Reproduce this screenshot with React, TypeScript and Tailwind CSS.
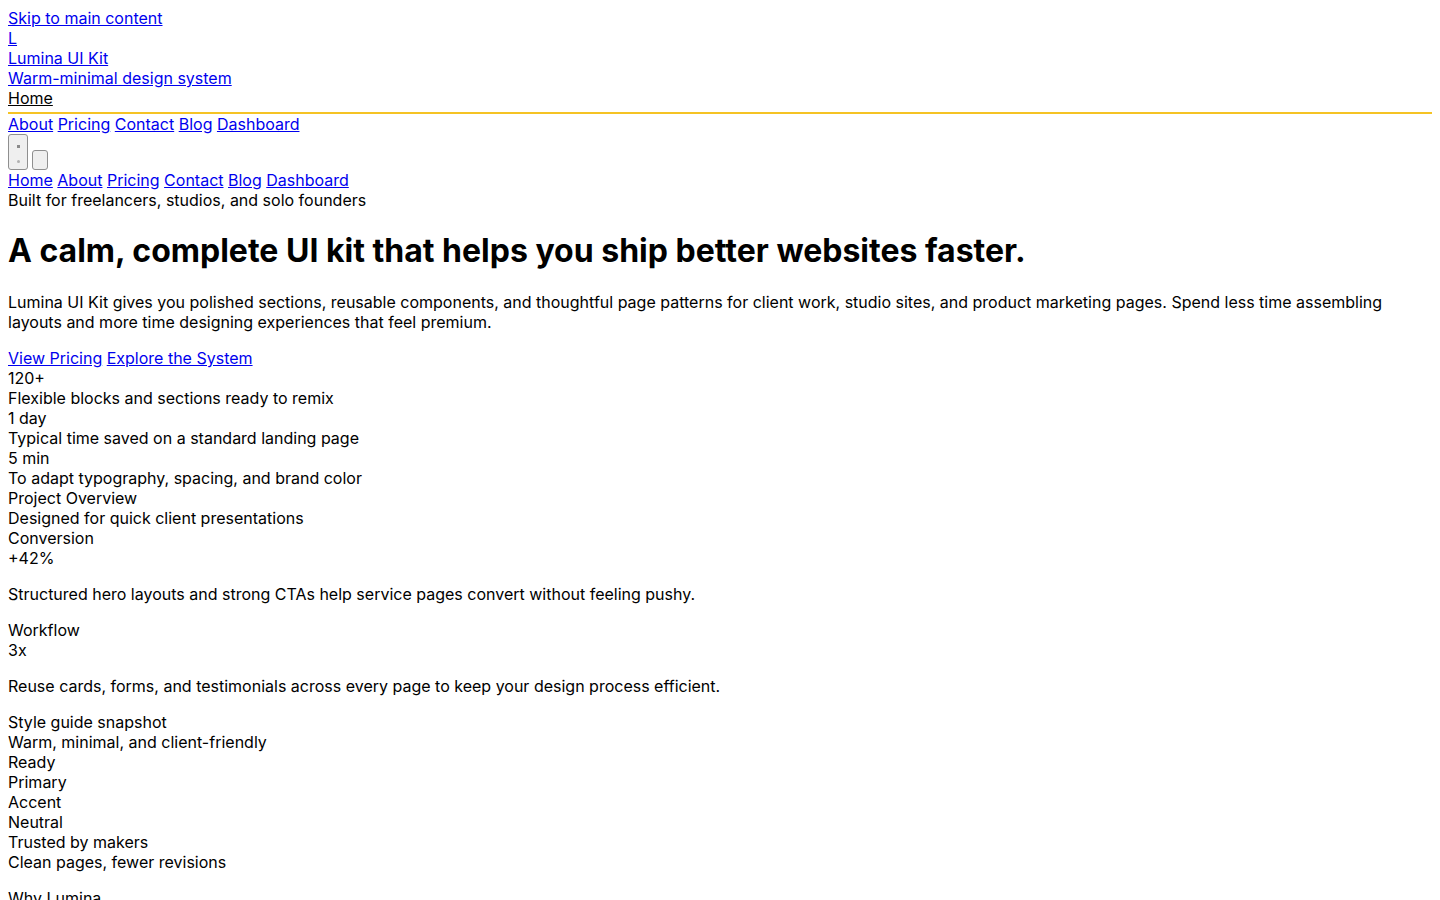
import React from "react";

const linkCls = "text-[#0000ee] underline";

function Links({ items }: { items: string[] }) {
  return (
    <div>
      {items.map((t, i) => (
        <React.Fragment key={t}>
          <a href="#" className={linkCls}>
            {t}
          </a>
          {i < items.length - 1 ? " " : null}
        </React.Fragment>
      ))}
    </div>
  );
}

export default function App() {
  return (
    <div className="min-h-screen bg-white p-2 font-['Inter',sans-serif] text-base leading-[normal] text-black">
      <div>
        <a href="#main" className={linkCls}>
          Skip to main content
        </a>
      </div>
      <header>
        <div>
          <a href="#" className={linkCls}>
            L
          </a>
        </div>
        <div>
          <a href="#" className={linkCls}>
            Lumina UI Kit
          </a>
        </div>
        <div>
          <a href="#" className={linkCls}>
            Warm-minimal design system
          </a>
        </div>
        <div className="border-b-2 border-[#f5c324] pb-1">
          <a href="#" className="text-black underline">
            Home
          </a>
        </div>
        <Links items={["About", "Pricing", "Contact", "Blog", "Dashboard"]} />
        <div className="flex items-end gap-1">
          <button
            type="button"
            aria-label="Toggle theme"
            className="flex h-9 w-5 flex-col items-center justify-start gap-[12px] rounded-[3px] border border-[#8f8f8f] bg-[#efefef] pt-[10px]"
          >
            <span className="block h-[3px] w-[3px] bg-[#8a8a8a]" />
            <span className="block h-[3px] w-[3px] rounded-full bg-[#b0b0b0]" />
          </button>
          <button
            type="button"
            aria-label="Open menu"
            className="h-5 w-4 rounded-[3px] border border-[#8f8f8f] bg-[#efefef]"
          />
        </div>
        <Links items={["Home", "About", "Pricing", "Contact", "Blog", "Dashboard"]} />
      </header>
      <main id="main">
        <div>Built for freelancers, studios, and solo founders</div>
        <h1 className="my-[21.44px] text-[32px] font-bold leading-[normal]">
          A calm, complete UI kit that helps you ship better websites faster.
        </h1>
        <p className="my-4">
          Lumina UI Kit gives you polished sections, reusable components, and thoughtful page
          patterns for client work, studio sites, and product marketing pages. Spend less time
          assembling layouts and more time designing experiences that feel premium.
        </p>
        <div>
          <a href="#" className={linkCls}>
            View Pricing
          </a>{" "}
          <a href="#" className={linkCls}>
            Explore the System
          </a>
        </div>
        <div>120+</div>
        <div>Flexible blocks and sections ready to remix</div>
        <div>1 day</div>
        <div>Typical time saved on a standard landing page</div>
        <div>5 min</div>
        <div>To adapt typography, spacing, and brand color</div>
        <div>Project Overview</div>
        <div>Designed for quick client presentations</div>
        <div>Conversion</div>
        <div>+42%</div>
        <p className="my-4">
          Structured hero layouts and strong CTAs help service pages convert without feeling pushy.
        </p>
        <div>Workflow</div>
        <div>3x</div>
        <p className="my-4">
          Reuse cards, forms, and testimonials across every page to keep your design process
          efficient.
        </p>
        <div>Style guide snapshot</div>
        <div>Warm, minimal, and client-friendly</div>
        <div>Ready</div>
        <div>Primary</div>
        <div>Accent</div>
        <div>Neutral</div>
        <div>Trusted by makers</div>
        <div>Clean pages, fewer revisions</div>
        <p className="my-4">Why Lumina</p>
      </main>
    </div>
  );
}
